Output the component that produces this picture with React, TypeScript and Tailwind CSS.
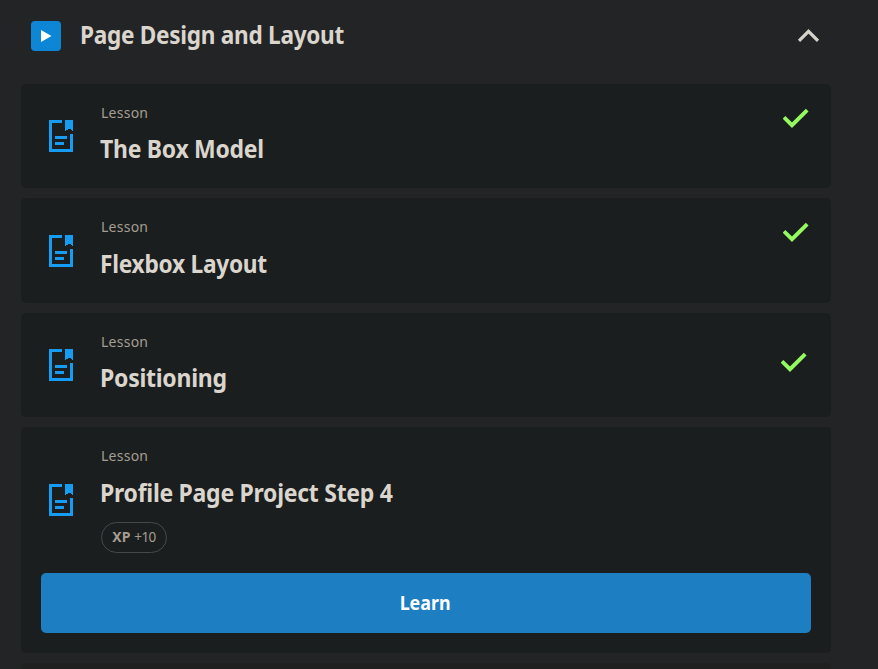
import React from "react";

type Lesson = {
  title: string;
  fit: string;
  height: string;
  check: string;
  top: string;
};

const lessons: Lesson[] = [
  { title: "The Box Model", fit: "scale-x-[0.919]", height: "h-[104px]", check: "mt-[24px] mr-[22px]", top: "mt-[36px]" },
  { title: "Flexbox Layout", fit: "scale-x-[0.909] translate-y-px", height: "h-[105px]", check: "mt-[24px] mr-[22px]", top: "mt-[37px]" },
  { title: "Positioning", fit: "scale-x-[0.921]", height: "h-[104px]", check: "mt-[39px] mr-[24px]", top: "mt-[36px]" },
];

function PageIcon() {
  return (
    <svg width="24" height="32" viewBox="0 0 24 32" fill="#169cf3" shapeRendering="crispEdges">
      <path d="M0 0H13V3H3V29H21V14H24V32H0Z" />
      <path d="M16 0H24V11L22 10L21 9H19L18 10L16 11Z" />
      <path d="M6 16H18V19H6Z M6 22H15V25H6Z" />
    </svg>
  );
}

function Check() {
  return (
    <svg width="26" height="21" viewBox="0 0 26 21" fill="none" stroke="#93fa5f" strokeWidth="3.9">
      <path d="M1 9.3L9 17.2L24.2 2.2" />
    </svg>
  );
}

function Heading({ title, fit }: { title: string; fit: string }) {
  return (
    <div className="w-[500px]">
      <div className="mt-[19px] h-[20px] text-[14px] leading-[20px] tracking-[0.25px] text-[#a59d91]">Lesson</div>
      <div className="mt-[7px] h-[37px] whitespace-nowrap text-[25px] font-bold leading-[36px] text-[#dad5cd]">
        <span className={"-ml-px inline-block origin-left tracking-[-0.3px] " + fit}>{title}</span>
      </div>
    </div>
  );
}

export default function App() {
  return (
    <div className="h-[669px] w-[878px] overflow-hidden bg-[#222426] pl-[21px] font-['Noto_Sans',sans-serif]">
      <header className="flex h-[84px] w-[810px] items-start pl-[10px]">
        <div className="mt-[21px] flex h-[30px] w-[30px] items-center justify-center rounded-[4px] bg-[#0d87d5]">
          <svg width="12" height="12" viewBox="0 0 12 12" fill="#fff">
            <path d="M1 0L11.5 6L1 12Z" />
          </svg>
        </div>
        <h1 className="ml-[19px] mt-[16px] whitespace-nowrap text-[25px] font-bold leading-[36px] text-[#dad5cd]">
          <span className="inline-block origin-left scale-x-[0.903] tracking-[-0.3px]">Page Design and Layout</span>
        </h1>
        <svg className="ml-auto mr-[12px] mt-[28px]" width="22" height="15" viewBox="0 0 22 15" fill="none" stroke="#d6d1c9" strokeWidth="3.2">
          <path d="M2 12.8L11.5 3.3L21 12.8" />
        </svg>
      </header>
      <main className="flex w-[810px] flex-col gap-[10px]">
        {lessons.map((l) => (
          <section key={l.title} className={"flex shrink-0 items-start rounded-[5px] bg-[#1b1e1f] pl-[28px] " + l.height}>
            <div className={l.top}>
              <PageIcon />
            </div>
            <div className="ml-[28px]">
              <Heading title={l.title} fit={l.fit} />
            </div>
            <div className={"ml-auto " + l.check}>
              <Check />
            </div>
          </section>
        ))}
        <section className="h-[226px] shrink-0 rounded-[5px] bg-[#1b1e1f] px-[20px]">
          <div className="flex h-[146px] items-start pl-[8px]">
            <div className="mt-[57px]">
              <PageIcon />
            </div>
            <div className="ml-[28px]">
              <Heading title="Profile Page Project Step 4" fit="scale-x-[0.92] translate-y-px" />
              <div className="mt-[12px] flex h-[31px] w-[66px] items-baseline justify-center gap-[4px] rounded-full border border-[#45494c] pt-[4px] leading-[20px] text-[#a59d91]">
                <span className="text-[14px] font-bold">XP</span>
                <span className="text-[13.5px] tracking-[-0.6px]">+10</span>
              </div>
            </div>
          </div>
          <button className="flex h-[60px] w-[770px] items-center justify-center rounded-[5px] bg-[#1e7ec2] text-[19px] font-bold text-white">
            <span className="mr-px scale-x-[0.94]">Learn</span>
          </button>
        </section>
        <div className="h-[20px] shrink-0 rounded-[5px] bg-[#202021]" />
      </main>
    </div>
  );
}
